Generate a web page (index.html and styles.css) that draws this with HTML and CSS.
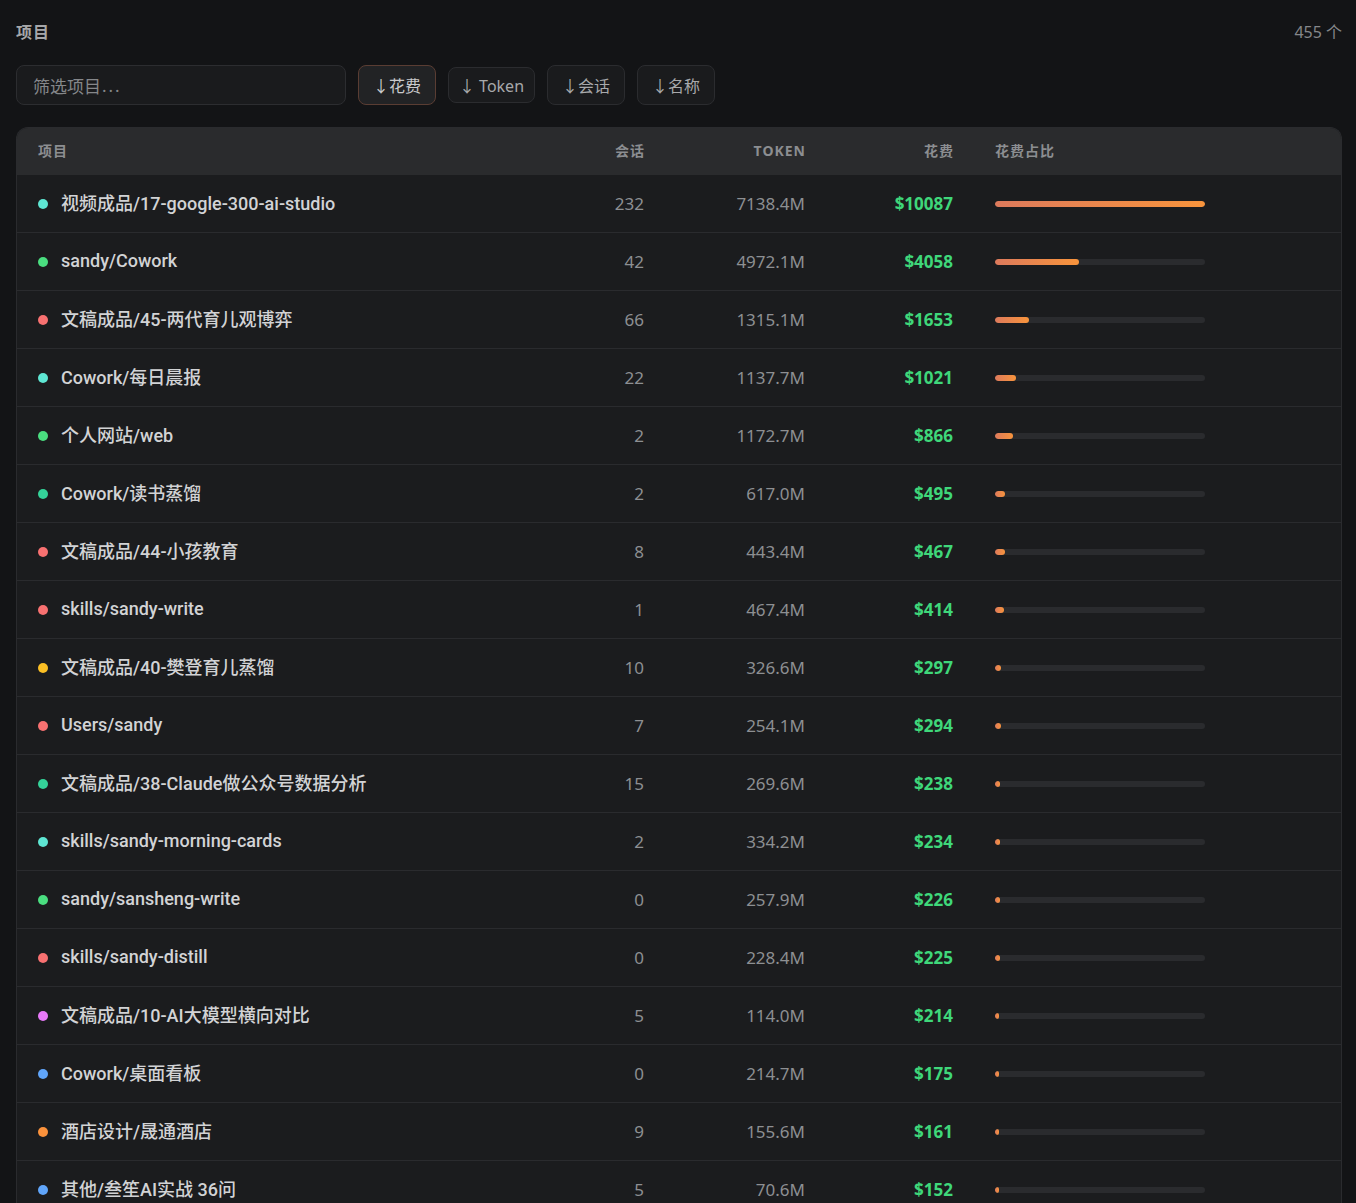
FILE: index.html
```html
<!DOCTYPE html>
<html lang="zh">
<head>
<meta charset="utf-8">
<title>项目</title>
<link rel="stylesheet" href="styles.css">
</head>
<body>
<div class="page">
  <div class="topbar">
    <div class="title">项目</div>
    <div class="count">455 个</div>
  </div>
  <div class="controls">
    <div class="filter">筛选项目<span class="ell">...</span></div>
    <button class="sort active">↓花费</button>
    <button class="sort latin">↓ Token</button>
    <button class="sort">↓会话</button>
    <button class="sort">↓名称</button>
  </div>
  <div class="table">
    <div class="row head">
      <div class="c-name">项目</div>
      <div class="c-num">会话</div>
      <div class="c-num token-h">TOKEN</div>
      <div class="c-num">花费</div>
      <div class="c-bar">花费占比</div>
    </div>
    <div class="row"><div class="c-name"><span class="dot cyan"></span>视频成品/17-google-300-ai-studio</div><div class="c-num">232</div><div class="c-num">7138.4M</div><div class="c-cost">$10087</div><div class="c-bar"><div class="track"><div class="fill" style="width:100%"></div></div></div></div>
    <div class="row"><div class="c-name"><span class="dot green"></span>sandy/Cowork</div><div class="c-num">42</div><div class="c-num">4972.1M</div><div class="c-cost">$4058</div><div class="c-bar"><div class="track"><div class="fill" style="width:40.23%"></div></div></div></div>
    <div class="row"><div class="c-name"><span class="dot red"></span>文稿成品/45-两代育儿观博弈</div><div class="c-num">66</div><div class="c-num">1315.1M</div><div class="c-cost">$1653</div><div class="c-bar"><div class="track"><div class="fill" style="width:16.39%"></div></div></div></div>
    <div class="row"><div class="c-name"><span class="dot cyan"></span>Cowork/每日晨报</div><div class="c-num">22</div><div class="c-num">1137.7M</div><div class="c-cost">$1021</div><div class="c-bar"><div class="track"><div class="fill" style="width:10.12%"></div></div></div></div>
    <div class="row"><div class="c-name"><span class="dot green"></span>个人网站/web</div><div class="c-num">2</div><div class="c-num">1172.7M</div><div class="c-cost">$866</div><div class="c-bar"><div class="track"><div class="fill" style="width:8.59%"></div></div></div></div>
    <div class="row"><div class="c-name"><span class="dot teal"></span>Cowork/读书蒸馏</div><div class="c-num">2</div><div class="c-num">617.0M</div><div class="c-cost">$495</div><div class="c-bar"><div class="track"><div class="fill" style="width:4.91%"></div></div></div></div>
    <div class="row"><div class="c-name"><span class="dot red"></span>文稿成品/44-小孩教育</div><div class="c-num">8</div><div class="c-num">443.4M</div><div class="c-cost">$467</div><div class="c-bar"><div class="track"><div class="fill" style="width:4.63%"></div></div></div></div>
    <div class="row"><div class="c-name"><span class="dot red"></span>skills/sandy-write</div><div class="c-num">1</div><div class="c-num">467.4M</div><div class="c-cost">$414</div><div class="c-bar"><div class="track"><div class="fill" style="width:4.10%"></div></div></div></div>
    <div class="row"><div class="c-name"><span class="dot yellow"></span>文稿成品/40-樊登育儿蒸馏</div><div class="c-num">10</div><div class="c-num">326.6M</div><div class="c-cost">$297</div><div class="c-bar"><div class="track"><div class="fill" style="width:2.94%"></div></div></div></div>
    <div class="row"><div class="c-name"><span class="dot red"></span>Users/sandy</div><div class="c-num">7</div><div class="c-num">254.1M</div><div class="c-cost">$294</div><div class="c-bar"><div class="track"><div class="fill" style="width:2.91%"></div></div></div></div>
    <div class="row"><div class="c-name"><span class="dot teal"></span>文稿成品/38-Claude做公众号数据分析</div><div class="c-num">15</div><div class="c-num">269.6M</div><div class="c-cost">$238</div><div class="c-bar"><div class="track"><div class="fill" style="width:2.36%"></div></div></div></div>
    <div class="row"><div class="c-name"><span class="dot cyan"></span>skills/sandy-morning-cards</div><div class="c-num">2</div><div class="c-num">334.2M</div><div class="c-cost">$234</div><div class="c-bar"><div class="track"><div class="fill" style="width:2.32%"></div></div></div></div>
    <div class="row"><div class="c-name"><span class="dot green"></span>sandy/sansheng-write</div><div class="c-num">0</div><div class="c-num">257.9M</div><div class="c-cost">$226</div><div class="c-bar"><div class="track"><div class="fill" style="width:2.24%"></div></div></div></div>
    <div class="row"><div class="c-name"><span class="dot red"></span>skills/sandy-distill</div><div class="c-num">0</div><div class="c-num">228.4M</div><div class="c-cost">$225</div><div class="c-bar"><div class="track"><div class="fill" style="width:2.23%"></div></div></div></div>
    <div class="row"><div class="c-name"><span class="dot magenta"></span>文稿成品/10-AI大模型横向对比</div><div class="c-num">5</div><div class="c-num">114.0M</div><div class="c-cost">$214</div><div class="c-bar"><div class="track"><div class="fill" style="width:2.12%"></div></div></div></div>
    <div class="row"><div class="c-name"><span class="dot blue"></span>Cowork/桌面看板</div><div class="c-num">0</div><div class="c-num">214.7M</div><div class="c-cost">$175</div><div class="c-bar"><div class="track"><div class="fill" style="width:1.73%"></div></div></div></div>
    <div class="row"><div class="c-name"><span class="dot orange"></span>酒店设计/晟通酒店</div><div class="c-num">9</div><div class="c-num">155.6M</div><div class="c-cost">$161</div><div class="c-bar"><div class="track"><div class="fill" style="width:1.60%"></div></div></div></div>
    <div class="row"><div class="c-name"><span class="dot blue"></span>其他/叁笙AI实战 36问</div><div class="c-num">5</div><div class="c-num">70.6M</div><div class="c-cost">$152</div><div class="c-bar"><div class="track"><div class="fill" style="width:1.51%"></div></div></div></div>
  </div>
</div>
</body>
</html>
```

FILE: styles.css
```css
* { box-sizing: border-box; }
html, body {
  margin: 0;
  padding: 0;
  background: #131416;
  font-family: "Noto Sans", "Noto Sans CJK SC", sans-serif;
  color: #d0d0d0;
}
.page {
  padding: 20px 14px 0 16px;
}
.topbar {
  display: flex;
  justify-content: space-between;
  align-items: center;
  height: 22px;
}
.title {
  font-size: 16px;
  font-weight: 700;
  color: #a6a7a9;
  letter-spacing: 1px;
}
.count {
  font-size: 16px;
  color: #85878a;
}
.controls {
  display: flex;
  align-items: center;
  gap: 12px;
  margin-top: 23px;
  height: 40px;
}
.filter {
  width: 330px;
  height: 40px;
  border: 1px solid #2c2d30;
  border-radius: 8px;
  background: #1a1b1d;
  color: #85878a;
  font-size: 17px;
  padding-left: 16px;
  display: flex;
  align-items: center;
}
.ell {
  letter-spacing: 2px;
  margin-left: 1px;
}
.sort {
  width: 78px;
  height: 40px;
  padding: 0;
  border: 1px solid #2b2c2f;
  border-radius: 8px;
  background: #1a1b1d;
  color: #a8a9ab;
  font-family: inherit;
  font-size: 16px;
  display: flex;
  align-items: center;
  justify-content: center;
}
.sort.latin {
  width: 87px;
  height: 36px;
}
.sort.active {
  border-color: #5a3d33;
  background: #222325;
  color: #c9cacc;
}
.table {
  margin-top: 22px;
  border: 1px solid #2a2b2e;
  border-bottom: none;
  border-radius: 12px 12px 0 0;
  overflow: hidden;
  background: #1b1c1e;
}
.row {
  display: grid;
  grid-template-columns: 526px 80px 161px 148px 1fr;
  align-items: center;
  height: 58px;
  padding: 0 20px 0 21px;
  border-bottom: 1px solid #2a2b2e;
}
.row.head {
  height: 47px;
  background: #2a2b2d;
  border-bottom: none;
  padding-bottom: 3px;
}
.head .c-name, .head .c-num, .head .c-bar {
  font-family: "Noto Sans", "Noto Sans CJK SC", sans-serif;
  font-size: 14px;
  font-weight: 700;
  color: #8c8e91;
  letter-spacing: 1px;
  padding-bottom: 0;
}
.head .c-num { margin-right: -1px; }
.c-name {
  display: flex;
  align-items: center;
  font-family: Roboto, "Noto Sans CJK SC", sans-serif;
  font-size: 18px;
  font-weight: 500;
  color: #d2d3d5;
  white-space: nowrap;
  padding-bottom: 3px;
}
.dot {
  width: 10px;
  height: 10px;
  border-radius: 50%;
  margin-right: 13px;
  flex: none;
  margin-top: 3px;
}
.cyan { background: #5ee6d3; }
.green { background: #4ade80; }
.teal { background: #34d399; }
.red { background: #f87171; }
.yellow { background: #fbbf24; }
.magenta { background: #e879f9; }
.blue { background: #60a5fa; }
.orange { background: #fb923c; }
.c-num {
  text-align: right;
  font-size: 17px;
  font-weight: 400;
  color: #8d8f92;
}
.c-cost {
  text-align: right;
  font-size: 17px;
  font-weight: 700;
  color: #3fd77a;
}
.c-bar {
  padding-left: 42px;
}
.track {
  width: 210px;
  height: 6px;
  border-radius: 3px;
  background: #2a2b2e;
  overflow: hidden;
}
.fill {
  height: 6px;
  min-width: 4px;
  border-radius: 3px;
  background: linear-gradient(90deg, #dd7a5c, #f8943c);
}
```
